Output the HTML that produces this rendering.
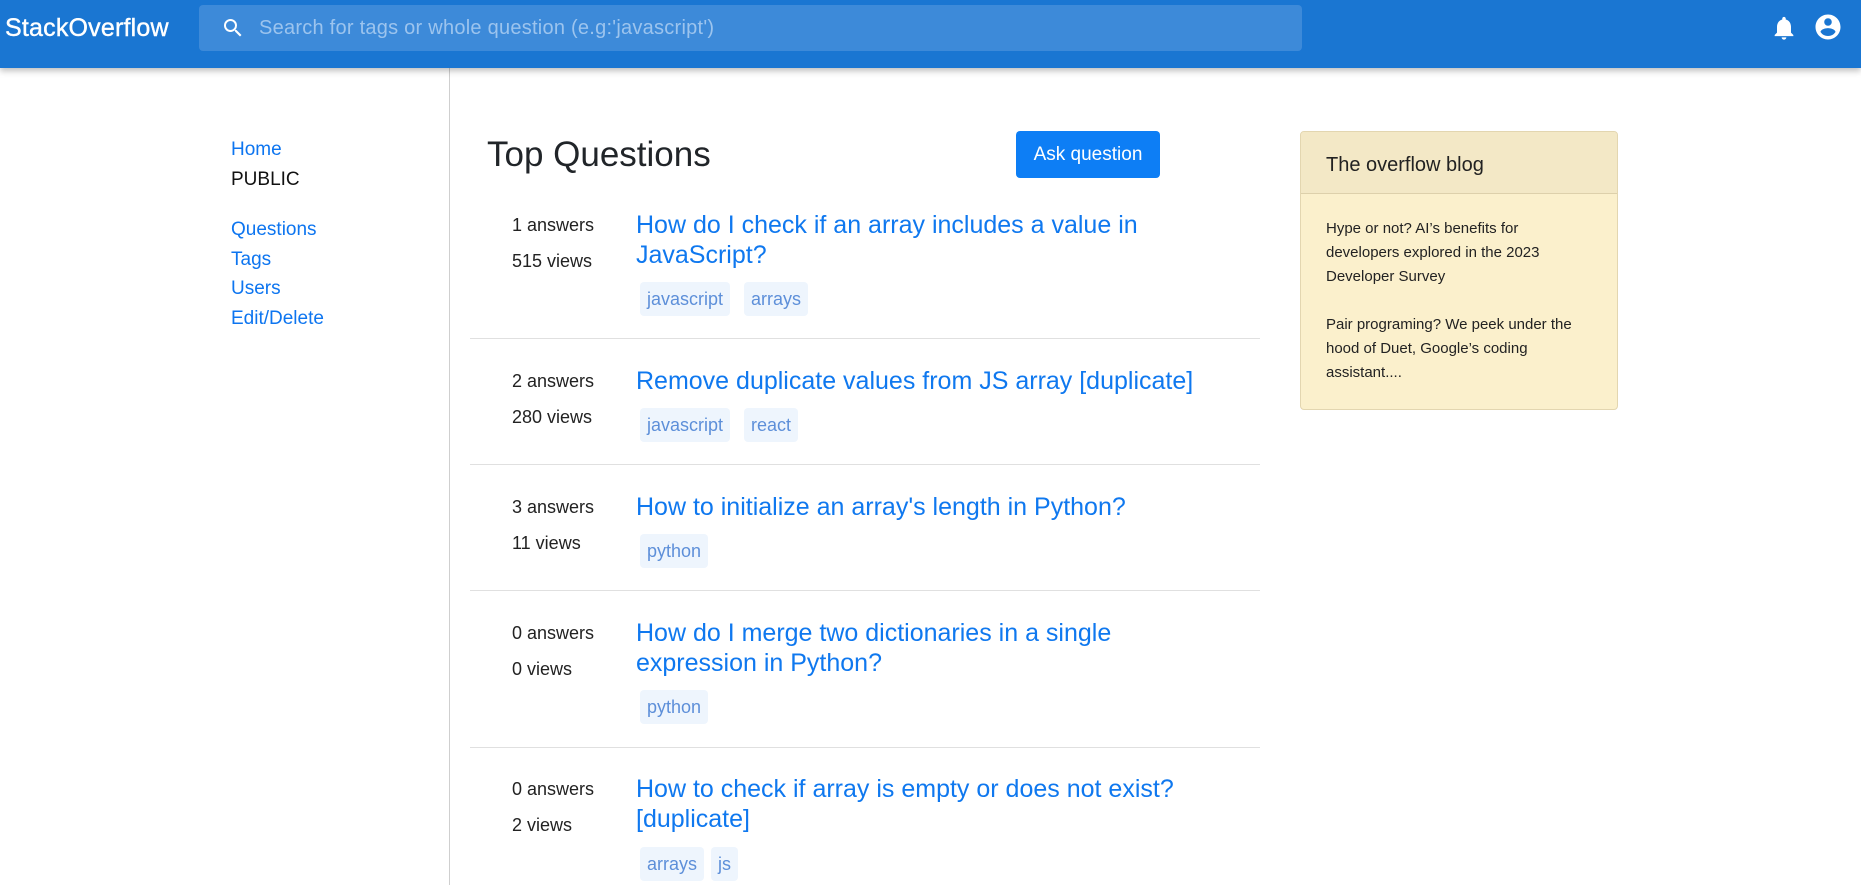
<!DOCTYPE html>
<html><head><meta charset="utf-8"><style>
*{margin:0;padding:0;box-sizing:border-box}
body{width:1861px;height:885px;overflow:hidden;background:#fff;font-family:"Liberation Sans",sans-serif;position:relative}
.nav{position:absolute;left:0;top:0;width:1861px;height:68px;background:#1a76d2;box-shadow:0 3px 6px rgba(0,0,0,.25);z-index:2}
.logo{position:absolute;left:5px;top:14px;color:#fff;font-size:25px;letter-spacing:0.2px;-webkit-text-stroke:0.4px #fff}
.search{position:absolute;left:199px;top:5px;width:1103px;height:46px;background:#3d8ad9;border-radius:4px}
.search span{position:absolute;left:60px;top:12px;color:#9cc4ee;font-size:20px;letter-spacing:0.25px}
.a{position:absolute;white-space:nowrap}
.side{position:absolute;left:449px;top:68px;width:1px;height:817px;background:#cfcfcf}
.lnk{color:#0d75f0;font-size:19px}
.stat{color:#222;font-size:18px}
.t{color:#0f78ef;font-size:25px;line-height:30px}
.tag{position:absolute;background:#eef5fd;color:#5d8fd9;font-size:18px;height:34px;line-height:34px;padding:0 7px;border-radius:4px}
.sep{position:absolute;left:470px;width:790px;height:1px;background:#e0e0e0}
</style></head><body>
<div class="nav">
<div class="logo">StackOverflow</div>
<div class="search">
<svg style="position:absolute;left:22px;top:11px" width="24" height="24" viewBox="0 0 24 24"><path fill="#fff" d="M15.5 14h-.79l-.28-.27A6.47 6.47 0 0016 9.5 6.5 6.5 0 109.5 16c1.61 0 3.09-.59 4.23-1.57l.27.28v.79l5 4.99L20.49 19l-4.99-5zm-6 0C7.01 14 5 11.990 5 9.5S7.01 5 9.5 5 14 7.01 14 9.5 11.99 14 9.5 14z"/></svg>
<span>Search for tags or whole question (e.g:'javascript')</span></div>
<svg style="position:absolute;left:1770px;top:14px" width="28" height="28" viewBox="0 0 24 24"><path fill="#fff" d="M12 22c1.1 0 2-.9 2-2h-4c0 1.1.9 2 2 2zm6-6v-5c0-3.07-1.63-5.640-4.5-6.32V4c0-.83-.67-1.5-1.5-1.5s-1.5.67-1.5 1.5v.68C7.64 5.36 6 7.92 6 11v5l-2 2v1h16v-1l-2-2z"/></svg>
<svg style="position:absolute;left:1813px;top:12px" width="30" height="30" viewBox="0 0 24 24"><path fill="#fff" d="M12 2C6.48 2 2 6.48 2 12s4.48 10 10 10 10-4.48 10-10S17.52 2 12 2zm0 3c1.66 0 3 1.34 3 3s-1.34 3-3 3-3-1.34-3-3 1.34-3 3-3zm0 14.2a7.2 7.2 0 01-6-3.22c.03-1.99 4-3.08 6-3.08 1.99 0 5.97 1.09 6 3.08a7.2 7.2 0 01-6 3.22z"/></svg>
</div>
<div class="side"></div>
<div class="a lnk" style="left:231px;top:139px">Home</div>
<div class="a" style="left:231px;top:169px;font-size:19px;color:#111">PUBLIC</div>
<div class="a lnk" style="left:231px;top:219px">Questions</div>
<div class="a lnk" style="left:231px;top:249px">Tags</div>
<div class="a lnk" style="left:231px;top:278px">Users</div>
<div class="a lnk" style="left:231px;top:308px">Edit/Delete</div>

<div class="a" style="left:487px;top:135px;font-size:35px;color:#212529">Top Questions</div>
<div class="a" style="left:1016px;top:131px;width:144px;height:47px;background:#0d7ef5;color:#fff;border-radius:4px;font-size:19px;text-align:center;line-height:47px">Ask question</div>

<div class="a stat" style="left:512px;top:215px">1 answers</div>
<div class="a stat" style="left:512px;top:251px">515 views</div>
<div class="a t" style="left:636px;top:210px">How do I check if an array includes a value in<br>JavaScript?</div>
<div class="tag" style="left:640px;top:282px">javascript</div><div class="tag" style="left:744px;top:282px">arrays</div>
<div class="sep" style="top:338px"></div>

<div class="a stat" style="left:512px;top:371px">2 answers</div>
<div class="a stat" style="left:512px;top:407px">280 views</div>
<div class="a t" style="left:636px;top:366px">Remove duplicate values from JS array [duplicate]</div>
<div class="tag" style="left:640px;top:408px">javascript</div><div class="tag" style="left:744px;top:408px">react</div>
<div class="sep" style="top:464px"></div>

<div class="a stat" style="left:512px;top:497px">3 answers</div>
<div class="a stat" style="left:512px;top:533px">11 views</div>
<div class="a t" style="left:636px;top:492px">How to initialize an array's length in Python?</div>
<div class="tag" style="left:640px;top:534px">python</div>
<div class="sep" style="top:590px"></div>

<div class="a stat" style="left:512px;top:623px">0 answers</div>
<div class="a stat" style="left:512px;top:659px">0 views</div>
<div class="a t" style="left:636px;top:618px">How do I merge two dictionaries in a single<br>expression in Python?</div>
<div class="tag" style="left:640px;top:690px">python</div>
<div class="sep" style="top:747px"></div>

<div class="a stat" style="left:512px;top:779px">0 answers</div>
<div class="a stat" style="left:512px;top:815px">2 views</div>
<div class="a t" style="left:636px;top:774px">How to check if array is empty or does not exist?<br>[duplicate]</div>
<div class="tag" style="left:640px;top:847px">arrays</div><div class="tag" style="left:711px;top:847px">js</div>

<div class="a" style="left:1300px;top:131px;width:318px;height:279px;background:#fbf0cc;border:1px solid #e3d6b0;border-radius:4px;overflow:hidden;white-space:normal">
<div style="height:62px;background:#f3e8c6;border-bottom:1px solid #ddd0ab;padding:22px 0 0 25px;font-size:20px;color:#222">The overflow blog</div>
<div style="padding:23px 0 0 25px;width:290px;font-size:15px;line-height:24px;color:#222">Hype or not? AI’s benefits for developers explored in the 2023 Developer Survey<br><br>Pair programing? We peek under the hood of Duet, Google’s coding assistant....</div>
</div>
</body></html>
